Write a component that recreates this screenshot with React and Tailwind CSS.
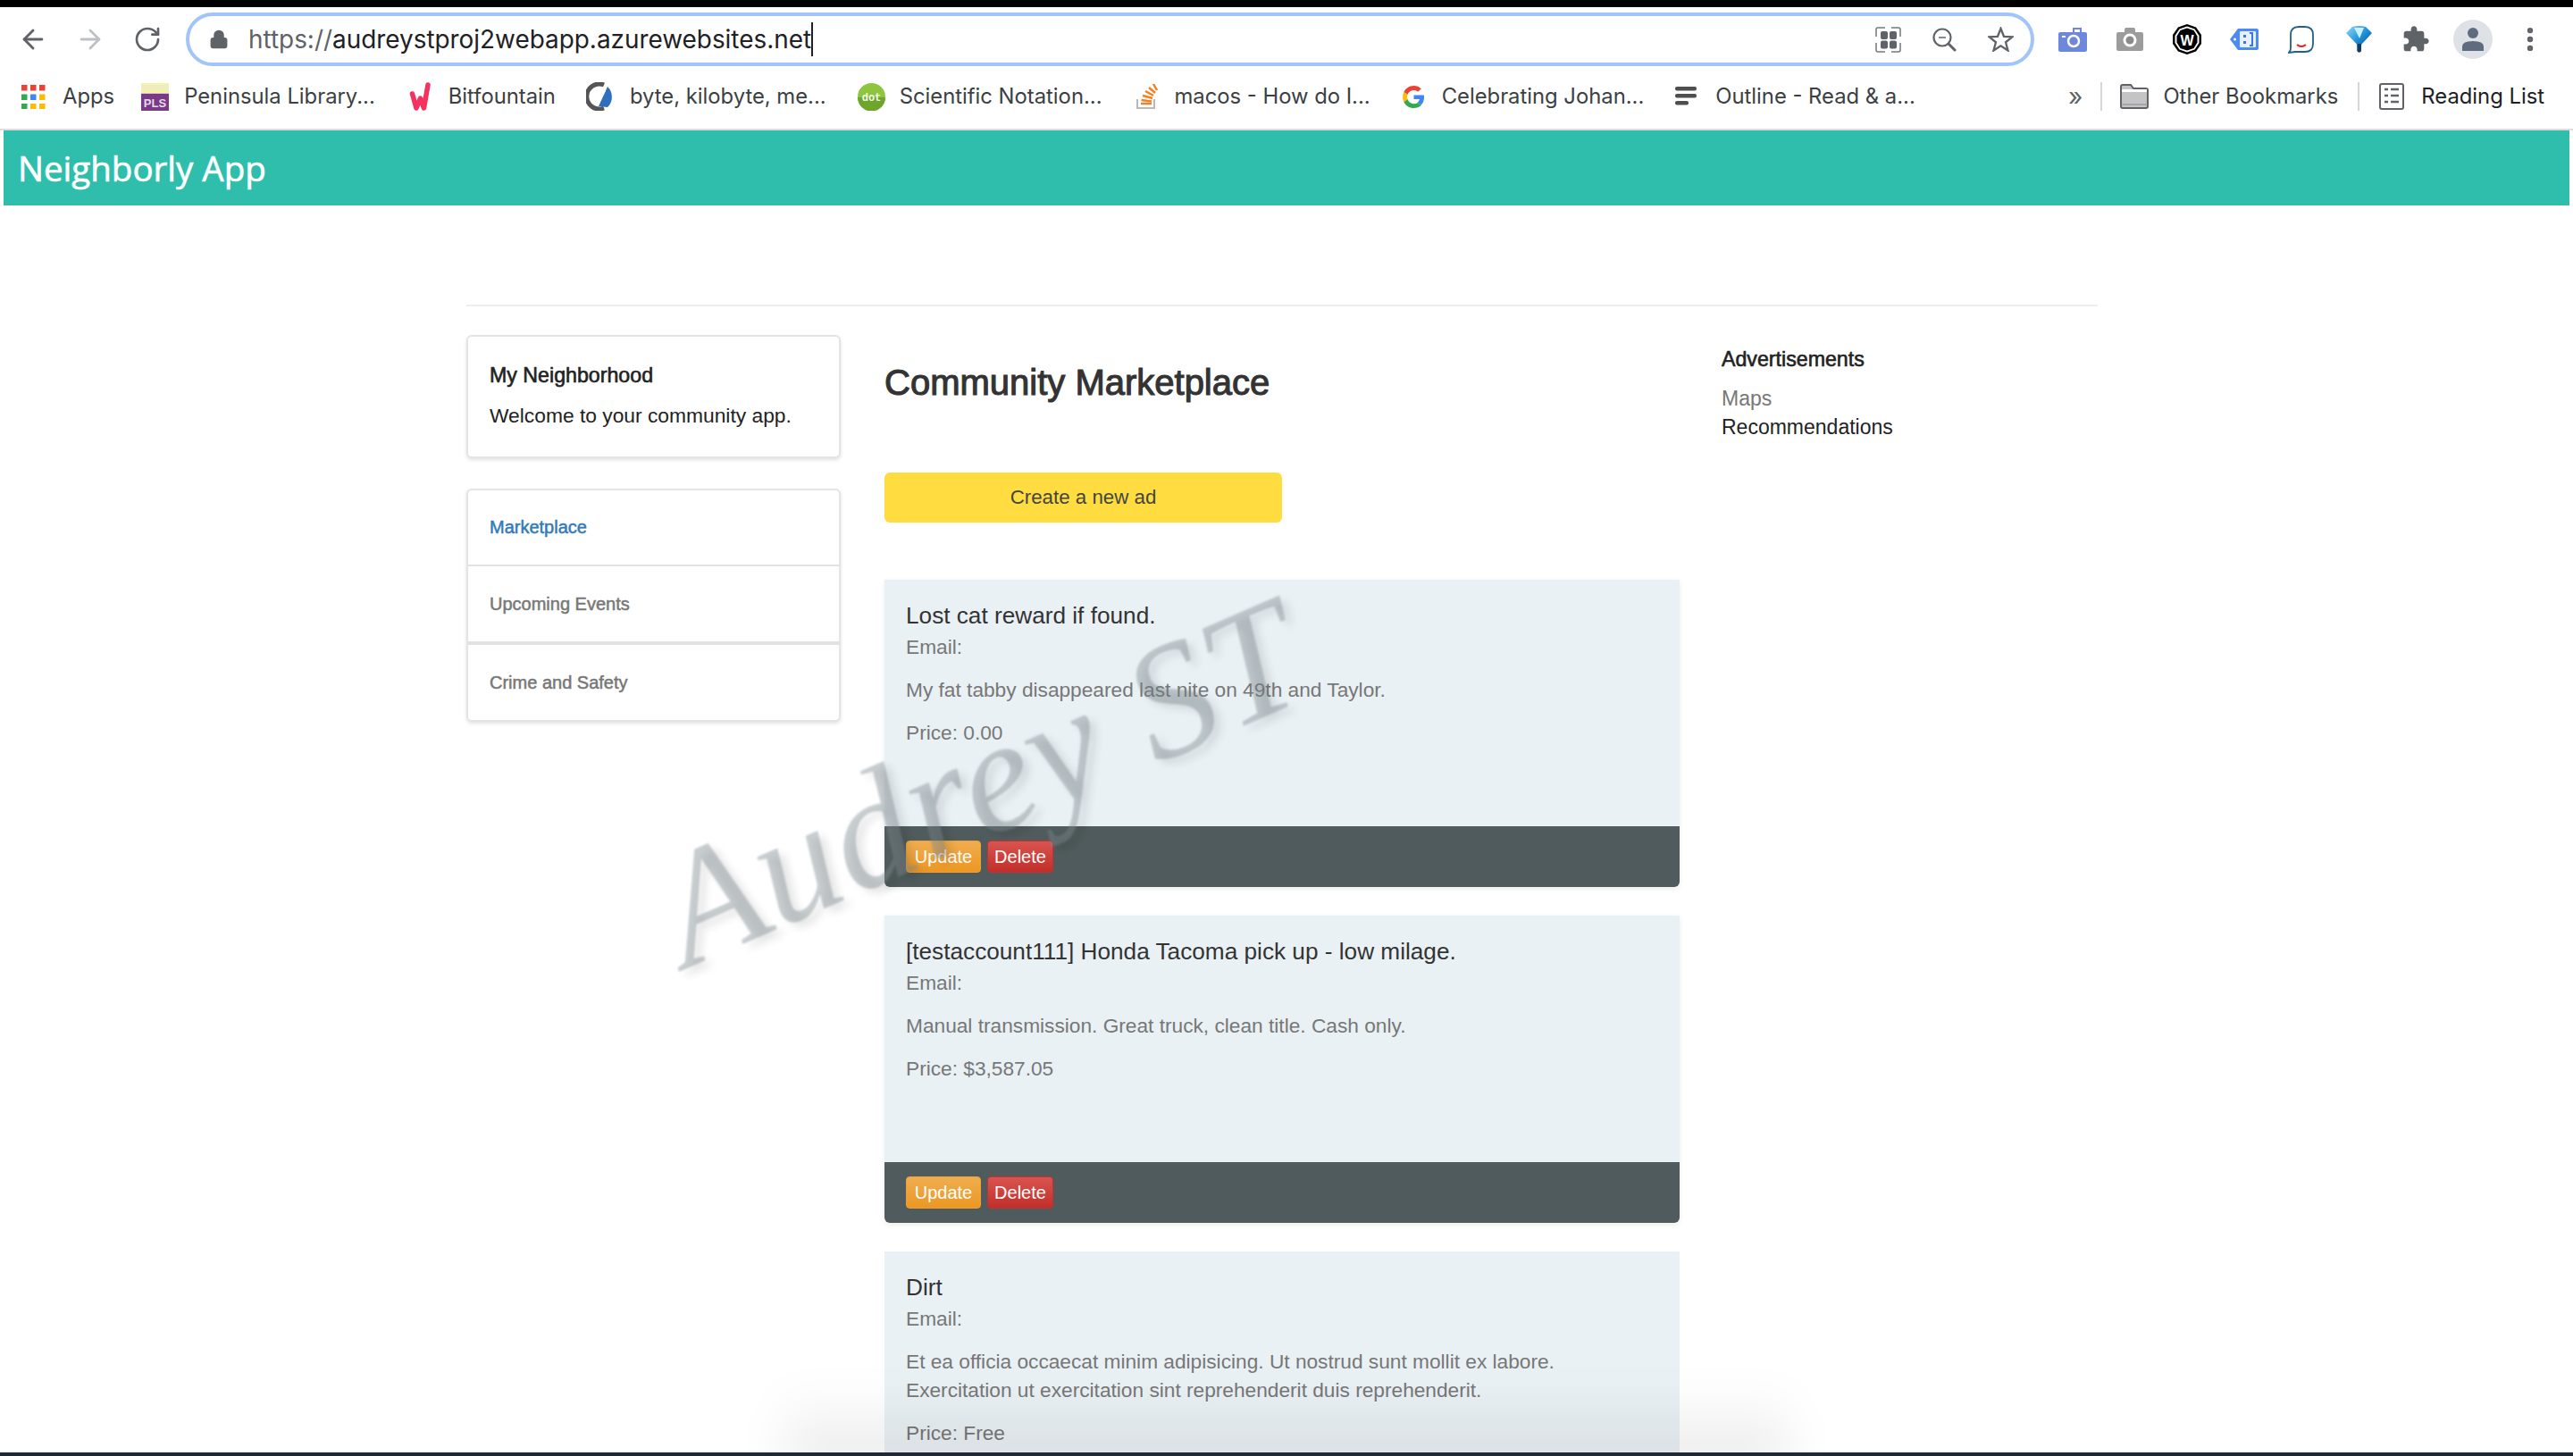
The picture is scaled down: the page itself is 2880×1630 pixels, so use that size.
import { ArrowLeft, ArrowRight, RotateCw, Lock, MoreVertical } from "lucide-react";

const AppsIcon = () => (
  <svg width="27" height="27" viewBox="0 0 27 27">
    {[
      ["#ea4335", "#ea4335", "#ea4335"],
      ["#34a853", "#4285f4", "#fbbc05"],
      ["#34a853", "#fbbc05", "#fbbc05"],
    ].map((row, y) =>
      row.map((c, x) => <rect key={`${x}${y}`} x={x * 10} y={y * 10.5} width="6.5" height="6.5" fill={c} />)
    )}
  </svg>
);

const PlsIcon = () => (
  <svg width="31" height="31" viewBox="0 0 31 31">
    <rect width="31" height="11" fill="#f5f3a8" />
    <rect y="2" width="31" height="6" fill="#efedc0" />
    <rect y="11" width="31" height="2" fill="#d8c8d8" />
    <rect y="12" width="31" height="19" fill="#7a3a86" />
    <text x="15.5" y="27" textAnchor="middle" fontSize="13" fontWeight="700" fill="#e4dcec" fontFamily="Liberation Sans, sans-serif">PLS</text>
  </svg>
);

const BitIcon = () => (
  <svg width="24" height="32" viewBox="0 0 24 32">
    <path d="M3.5 13 L8 29 L12.500 18 L16.500 29 L21 3" fill="none" stroke="#f5325f" strokeWidth="5.500" strokeLinecap="round" strokeLinejoin="round" />
  </svg>
);

const ByteIcon = () => (
  <svg width="32" height="32" viewBox="0 0 32 32">
    <path d="M20 3 A14 14 0 1 0 20 29" fill="none" stroke="#555" strokeWidth="5" />
    <path d="M24 5 C30 10 31 22 24 28 L14 27 Z" fill="#2f6fbd" />
    <path d="M21 9 L13 24" stroke="#fff" strokeWidth="2.5" />
  </svg>
);

const DotIcon = () => (
  <svg width="31" height="31" viewBox="0 0 31 31">
    <circle cx="15.5" cy="15.5" r="15.5" fill="#8cc63f" />
    <path d="M0 16 A15.5 15.5 0 0 0 31 16 Z" fill="#6ea52c" />
    <text x="15.5" y="20" textAnchor="middle" fontSize="12" fontWeight="700" fill="#f4fbe6" fontFamily="Liberation Mono, monospace">dot</text>
  </svg>
);

const StackIcon = () => (
  <svg width="24" height="28" viewBox="0 0 24 28">
    <path d="M1 17 V27 H20 V17" fill="none" stroke="#b8b8b8" strokeWidth="2" />
    <path d="M5 22 H17" stroke="#f48024" strokeWidth="2.5" />
    <path d="M5.5 18 L17 19.5" stroke="#f48024" strokeWidth="2.5" />
    <path d="M7 13 L18 16" stroke="#f48024" strokeWidth="2.5" />
    <path d="M10 8 L19 13" stroke="#f48024" strokeWidth="2.5" />
    <path d="M14 4 L21 10" stroke="#f48024" strokeWidth="2.5" />
    <path d="M19 0 L23 7" stroke="#f48024" strokeWidth="2.5" />
  </svg>
);

const GoogleIcon = () => (
  <svg width="25" height="25" viewBox="0 0 48 48">
    <path fill="#EA4335" d="M24 9.5c3.5 0 6.7 1.3 9.1 3.5l6.8-6.8C35.800 2.400 30.200 0 24 0 14.600 0 6.500 5.400 2.600 13.200l7.900 6.100C12.400 13.700 17.700 9.500 24 9.500z" />
    <path fill="#4285F4" d="M46.100 24.500c0-1.600-.1-3.100-.4-4.500H24v9h12.400c-.5 2.900-2.100 5.300-4.600 7l7.500 5.800c4.400-4 6.800-10 6.800-17.300z" />
    <path fill="#FBBC05" d="M10.500 28.700c-.5-1.400-.8-3-.8-4.700s.3-3.200.8-4.700l-7.900-6.100C.900 16.500 0 20.100 0 24s.9 7.500 2.600 10.800l7.900-6.100z" />
    <path fill="#34A853" d="M24 48c6.500 0 11.900-2.100 15.900-5.800l-7.500-5.800c-2.200 1.500-5 2.300-8.300 2.300-6.300 0-11.600-4.200-13.500-9.900l-7.900 6.100C6.500 42.600 14.600 48 24 48z" />
  </svg>
);

const OutlineIcon = () => (
  <svg width="25" height="22" viewBox="0 0 25 22">
    <rect width="24" height="4.500" rx="2" fill="#4e4e4e" />
    <rect y="8" width="24" height="4.500" rx="2" fill="#4e4e4e" />
    <rect y="16" width="15" height="4.500" rx="2" fill="#4e4e4e" />
  </svg>
);

const FolderIcon = () => (
  <svg width="32" height="28" viewBox="0 0 32 28">
    <path d="M1 3 Q1 1 3 1 H12 L15 5 H29 Q31 5 31 7 V25 Q31 27 29 27 H3 Q1 27 1 25 Z" fill="#c4c4c4" stroke="#5f6368" strokeWidth="2" />
    <path d="M2 6 H30 V9 H2 Z" fill="#fff" />
    <path d="M1 23 H31" stroke="#8a8a8a" strokeWidth="1" />
  </svg>
);

const ReadingIcon = () => (
  <svg width="28" height="30" viewBox="0 0 28 30">
    <rect x="1" y="1" width="26" height="28" rx="2" fill="#fff" stroke="#5f6368" strokeWidth="2" />
    {[7, 14, 21].map((y) => (
      <g key={y} stroke="#5f6368" strokeWidth="2.500">
        <path d={`M6 ${y} H10`} />
        <path d={`M13 ${y} H22`} />
      </g>
    ))}
  </svg>
);

const ScanIcon = () => (
  <svg width="29" height="29" viewBox="0 0 29 29">
    <path d="M11 1 H3 Q1 1 1 3 V11 M18 1 H26 Q28 1 28 3 V11 M11 28 H3 Q1 28 1 26 V18 M18 28 H26 Q28 28 28 26 V18" fill="none" stroke="#777" strokeWidth="1.500" />
    <rect x="6" y="5" width="8" height="9" rx="2" fill="#5f6368" />
    <rect x="16" y="5" width="8" height="9" rx="2" fill="#5f6368" />
    <rect x="6" y="15.500" width="8" height="9" rx="2" fill="#5f6368" />
    <rect x="16" y="15.500" width="8" height="9" rx="2" fill="#5f6368" />
  </svg>
);

const ZoomOutIcon = () => (
  <svg width="27" height="27" viewBox="0 0 27 27">
    <circle cx="11" cy="11" r="9.500" fill="none" stroke="#5f6368" strokeWidth="2.200" />
    <path d="M7 11 H15" stroke="#5f6368" strokeWidth="1.500" />
    <path d="M18 18 L25 25" stroke="#5f6368" strokeWidth="3" strokeLinecap="round" />
  </svg>
);

const StarIcon = () => (
  <svg width="29" height="28" viewBox="0 0 29 28">
    <polygon points="14.500,2 18,10.800 27.500,11.300 20,17.300 22.500,26.500 14.500,21.300 6.500,26.500 9,17.300 1.500,11.300 11,10.800" fill="none" stroke="#5f6368" strokeWidth="2.300" />
  </svg>
);

const BlueCamera = () => (
  <svg width="32" height="27" viewBox="0 0 32 27">
    <path d="M2 5 H16 V0 H26 V5 H30 Q32 5 32 7 V25 Q32 27 30 27 H2 Q0 27 0 25 V7 Q0 5 2 5 Z" fill="#6c87dc" />
    <rect x="18" y="2" width="6" height="3" fill="#fff" />
    <circle cx="17" cy="15" r="6" fill="none" stroke="#fff" strokeWidth="2.500" />
    <rect x="4" y="9" width="4" height="2" fill="#fff" />
  </svg>
);

const GreyCamera = () => (
  <svg width="30" height="26" viewBox="0 0 30 26">
    <path d="M2 5 H9 V2 Q9 0 11 0 H19 Q21 0 21 2 V5 H28 Q30 5 30 7 V24 Q30 26 28 26 H2 Q0 26 0 24 V7 Q0 5 2 5 Z" fill="#9c9c9c" />
    <circle cx="15" cy="14" r="6" fill="#8a8a8a" stroke="#fff" strokeWidth="3" />
  </svg>
);

const WBadge = () => (
  <svg width="34" height="34" viewBox="0 0 34 34">
    <path d="M17 0 L27 3.500 L33 12 V22 L27 30.500 L17 34 L7 30.500 L1 22 V12 L7 3.500 Z" fill="#000" />
    <path d="M17 2.500 L25.500 5.500 L30.500 13 V21 L25.500 28.500 L17 31.500 L8.500 28.500 L3.500 21 V13 L8.500 5.500 Z" fill="#fff" />
    <path d="M17 4.500 L24.500 7 L28.500 13.500 V20.500 L24.500 27 L17 29.500 L9.500 27 L5.500 20.500 V13.500 L9.500 7 Z" fill="#000" />
    <text x="17" y="23.500" textAnchor="middle" fontSize="16" fontWeight="700" fill="#fff" fontFamily="Liberation Sans, sans-serif">W</text>
  </svg>
);

const TagIcon = () => (
  <svg width="32" height="24" viewBox="0 0 32 24">
    <path d="M9 0 H30 Q32 0 32 2 V22 Q32 24 30 24 H9 L0 12 Z" fill="#4c8bf5" />
    <rect x="11" y="3" width="18" height="18" rx="1" fill="#e8f0fe" />
    <rect x="15" y="7" width="3" height="3" fill="#3a76e0" />
    <rect x="15" y="14" width="3" height="3" fill="#3a76e0" />
    <path d="M22 5 H25 V19 H22" fill="none" stroke="#3a76e0" strokeWidth="2" />
    <circle cx="5.500" cy="12" r="1.500" fill="#fff" />
  </svg>
);

const BubbleIcon = () => (
  <svg width="30" height="32" viewBox="0 0 30 32">
    <path d="M3 26 V11 Q3 2 12 2 H19 Q28 2 28 11 V21 Q28 30 19 30 H8 L1 31 Q3 29 3 26 Z" fill="#fff" stroke="#1f5f88" strokeWidth="1.800" />
    <path d="M10 22 Q15 26 20 22" fill="none" stroke="#e0201b" strokeWidth="2" />
  </svg>
);

const FunnelIcon = () => (
  <svg width="29" height="30" viewBox="0 0 29 30">
    <defs>
      <linearGradient id="funnelFill" x1="0" y1="0" x2="1" y2="1">
        <stop offset="0" stopColor="#8fdcf7" />
        <stop offset="0.5" stopColor="#1c8fd8" />
        <stop offset="1" stopColor="#0a3f80" />
      </linearGradient>
    </defs>
    <path d="M0 8 L7 1 Q14.500 -1 22 1 L29 8 L17 21 V28 Q14.500 31 12.500 28 V21 Z" fill="url(#funnelFill)" />
    <path d="M9 2 L20 2 L15 14 Z" fill="#c9f0fb" />
    <path d="M12.500 20 H17 V28 Q14.500 31 12.500 28 Z" fill="#173a5e" />
  </svg>
);

const PuzzleIcon = () => (
  <svg width="32" height="32" viewBox="0 0 24 24">
    <path fill="#5f6368" d="M20.500 11H19V7c0-1.100-.9-2-2-2h-4V3.500C13 2.120 11.880 1 10.500 1S8 2.120 8 3.500V5H4c-1.100 0-1.990.9-1.990 2v3.800H3.500c1.490 0 2.700 1.210 2.700 2.700s-1.210 2.700-2.700 2.700H2V20c0 1.100.9 2 2 2h3.800v-1.500c0-1.490 1.210-2.700 2.700-2.700 1.490 0 2.700 1.210 2.700 2.700V22H17c1.100 0 2-.9 2-2v-4h1.500c1.380 0 2.500-1.120 2.500-2.500S21.880 11 20.500 11z" />
  </svg>
);

const AvatarIcon = () => (
  <div className="w-[44px] h-[44px] rounded-full bg-[#dee1e6] flex items-center justify-center">
    <svg width="24" height="26" viewBox="0 0 24 26">
      <circle cx="12" cy="6" r="6" fill="#5f6b7e" />
      <path d="M0 26 V21 Q0 15 12 15 Q24 15 24 21 V26 Z" fill="#5f6b7e" />
    </svg>
  </div>
);

const bookmarks = [
  { icon: <AppsIcon />, label: "Apps", w: "w-[27px]", ml: "ml-[24px]", gap: "gap-[19px]" },
  { icon: <PlsIcon />, label: "Peninsula Library...", w: "w-[31px]", ml: "ml-[30px]", gap: "gap-[17px]" },
  { icon: <BitIcon />, label: "Bitfountain", w: "w-[26px]", ml: "ml-[37px]", gap: "gap-[19px]" },
  { icon: <ByteIcon />, label: "byte, kilobyte, me...", w: "w-[32px]", ml: "ml-[34px]", gap: "gap-[17px]" },
  { icon: <DotIcon />, label: "Scientific Notation...", w: "w-[31px]", ml: "ml-[35px]", gap: "gap-[16px]" },
  { icon: <StackIcon />, label: "macos - How do I...", w: "w-[24px]", ml: "ml-[38px]", gap: "gap-[19px]" },
  { icon: <GoogleIcon />, label: "Celebrating Johan...", w: "w-[25px]", ml: "ml-[36px]", gap: "gap-[19px]" },
  { icon: <OutlineIcon />, label: "Outline - Read & a...", w: "w-[25px]", ml: "ml-[35px]", gap: "gap-[20px]" },
];

const listings = [
  {
    title: "Lost cat reward if found.",
    desc: ["My fat tabby disappeared last nite on 49th and Taylor."],
    price: "Price: 0.00",
  },
  {
    title: "[testaccount111] Honda Tacoma pick up - low milage.",
    desc: ["Manual transmission. Great truck, clean title. Cash only."],
    price: "Price: $3,587.05",
  },
];

const Listing = ({ title, desc, price }) => (
  <div className="rounded-b-md shadow-[0_2px_6px_rgba(0,0,0,0.08)] mb-[32px]">
    <div className="bg-[#eaf1f5] h-[276px] px-[24px] pt-[25px]">
      <h3 className="text-[26.200px] leading-[30px] text-[#333]">{title}</h3>
      <div className="text-[#777] text-[22.700px] leading-[32px] mt-[4px]">Email:</div>
      {desc.map((d) => (
        <p key={d} className="text-[#777] text-[22.700px] leading-[32px] mt-[16px]">{d}</p>
      ))}
      <p className="text-[#777] text-[22.700px] leading-[32px] mt-[16px]">{price}</p>
    </div>
    <div className="bg-[#4f5b5c] h-[68px] rounded-b-md px-[24px] flex items-center gap-[7px]">
      <button className="w-[84px] h-[36px] rounded-[4px] bg-gradient-to-b from-[#f0ad4e] to-[#ec971f] border border-[#eea236] text-white text-[20px]">Update</button>
      <button className="w-[74px] h-[36px] rounded-[4px] bg-gradient-to-b from-[#d9534f] to-[#c12e2a] border border-[#c9302c] text-white text-[20px]">Delete</button>
    </div>
  </div>
);

export default function App() {
  return (
    <div className="relative w-[2880px] h-[1630px] overflow-hidden bg-white font-['Liberation_Sans',sans-serif]">
      <div className="h-[8px] bg-black" />

      {/* browser toolbar */}
      <div className="h-[72px] flex items-center pl-[5px] text-[#5f6368]">
        <div className="w-[64px] flex justify-center"><ArrowLeft size={34} strokeWidth={2} /></div>
        <div className="w-[64px] flex justify-center text-[#bdc1c6]"><ArrowRight size={34} strokeWidth={2} /></div>
        <div className="w-[64px] flex justify-center"><RotateCw size={32} strokeWidth={2} /></div>
        <div className="ml-[11px] w-[2069px] h-[60px] rounded-full border-[4px] border-[#a1c5fb] flex items-center pl-[22px]">
          <Lock size={22} fill="#5f6368" strokeWidth={2.500} />
          <div className="ml-[22px] font-['Inter',sans-serif] text-[27.900px] text-[#202124] border-r-2 border-[#202124] leading-[38px]">
            <span className="text-[#5f6368]">https://</span>audreystproj2webapp.azurewebsites.net
          </div>
          <div className="ml-auto mr-[19px] flex items-center">
            <ScanIcon />
            <div className="ml-[35px]"><ZoomOutIcon /></div>
            <div className="ml-[35px]"><StarIcon /></div>
          </div>
        </div>
        <div className="ml-[11px] flex items-center">
          <div className="w-[64px] flex justify-center"><BlueCamera /></div>
          <div className="w-[64px] flex justify-center"><GreyCamera /></div>
          <div className="w-[64px] flex justify-center"><WBadge /></div>
          <div className="w-[64px] flex justify-center"><TagIcon /></div>
          <div className="w-[64px] flex justify-center"><BubbleIcon /></div>
          <div className="w-[64px] flex justify-center"><FunnelIcon /></div>
          <div className="w-[64px] flex justify-center"><PuzzleIcon /></div>
          <div className="w-[64px] flex justify-center"><AvatarIcon /></div>
          <div className="w-[64px] flex justify-center"><MoreVertical size={34} strokeWidth={2.500} /></div>
        </div>
      </div>

      {/* bookmarks bar */}
      <div className="h-[64px] pb-[8px] flex items-center font-['Inter',sans-serif] text-[23.800px] text-[#3c4043]">
        {bookmarks.map((b) => (
          <div key={b.label} className={`flex items-center ${b.ml} ${b.gap} whitespace-nowrap`}>
            <div className={`${b.w} flex justify-center`}>{b.icon}</div>
            {b.label}
          </div>
        ))}
        <div className="ml-auto flex items-center pr-[32px]">
          <span className="text-[28px] text-[#5f6368]">»</span>
          <div className="w-[2px] h-[32px] bg-[#d5d6d8] ml-[20px] mr-[20px]" />
          <FolderIcon />
          <span className="ml-[16px]">Other Bookmarks</span>
          <div className="w-[2px] h-[32px] bg-[#d5d6d8] mx-[22px]" />
          <ReadingIcon />
          <span className="ml-[19px] text-[#202124]">Reading List</span>
        </div>
      </div>
      <div className="h-[2px] bg-[#e0dde0]" />

      {/* page */}
      <div className="mx-[4px] h-[84px] bg-[#2fbeac] flex items-center pl-[16px]">
        <span className="mt-[2px] font-['Open_Sans',sans-serif] text-[38.500px] text-white [-webkit-text-stroke:0.6px_#ffffff]">Neighborly App</span>
      </div>

      <div className="ml-[522px] w-[1826px] mt-[111px] border-t-2 border-[#eeeeee] pt-[32px] flex">
        <aside className="w-[419px]">
          <div className="h-[138px] bg-white border-2 border-[#e4e4e4] rounded-md shadow-[0_2px_4px_rgba(0,0,0,0.12)] px-[24px] pt-[26px] text-[22.800px] text-[#222]">
            <div className="leading-[34px] text-[23.200px] [-webkit-text-stroke:0.6px_#222222]">My Neighborhood</div>
            <div className="leading-[34px] mt-[11px]">Welcome to your community app.</div>
          </div>
          <div className="mt-[34px] bg-white border-2 border-[#e4e4e4] rounded-md shadow-[0_2px_4px_rgba(0,0,0,0.12)] text-[20px]">
            <div className="h-[85px] px-[24px] pb-[2px] flex items-center text-[#337ab7] border-b-2 border-[#e2e2e2] [-webkit-text-stroke:0.5px_#337ab7]">Marketplace</div>
            <div className="h-[88px] px-[24px] flex items-center text-[#777] border-b-4 border-[#e2e2e2] [-webkit-text-stroke:0.5px_#777777]">Upcoming Events</div>
            <div className="h-[84px] px-[24px] flex items-center text-[#777] [-webkit-text-stroke:0.5px_#777777]">Crime and Safety</div>
          </div>
        </aside>

        <main className="w-[890px] ml-[49px]">
          <h1 className="mt-[28px] text-[40px] leading-[50px] text-[#333] [-webkit-text-stroke:1.1px_#333333]">Community Marketplace</h1>
          <button className="mt-[76px] block w-[445px] h-[56px] rounded-md bg-[#ffdd40] text-[#444] text-[22.300px]">Create a new ad</button>
          <div className="mt-[64px]">
            {listings.map((l) => (
              <Listing key={l.title} {...l} />
            ))}
            <div className="bg-[#eaf1f5] h-[300px] px-[24px] pt-[25px]">
              <h3 className="text-[26.200px] leading-[30px] text-[#333]">Dirt</h3>
              <div className="text-[#777] text-[22.700px] leading-[32px] mt-[4px]">Email:</div>
              <p className="text-[#777] text-[22.700px] leading-[32px] mt-[16px]">
                Et ea officia occaecat minim adipisicing. Ut nostrud sunt mollit ex labore.
                <br />
                Exercitation ut exercitation sint reprehenderit duis reprehenderit.
              </p>
              <p className="text-[#777] text-[22.700px] leading-[32px] mt-[16px]">Price: Free</p>
            </div>
          </div>
        </main>

        <aside className="ml-[47px] text-[23px]">
          <div className="mt-[11px] leading-[32px] text-[23.200px] text-[#222] [-webkit-text-stroke:0.6px_#222222]">Advertisements</div>
          <div className="mt-[12px] leading-[32px] text-[#777]">Maps</div>
          <div className="leading-[32px] text-[#222]">Recommendations</div>
        </aside>
      </div>

      {/* watermark over the page */}
      <div className="absolute left-[745px] top-[939px] origin-left -rotate-[23.500deg] whitespace-nowrap pointer-events-none font-['Liberation_Serif',serif] italic text-[180px] leading-none tracking-[2px] text-[rgba(125,135,140,0.42)] blur-[1px] [text-shadow:5px_8px_10px_rgba(0,0,0,0.1)]">
        Audrey ST
      </div>

      {/* dock shadow at the bottom edge */}
      <div className="absolute left-[880px] right-[880px] -bottom-[16px] h-[90px] bg-gradient-to-t from-[rgba(0,0,0,0.1)] to-transparent blur-[26px]" />
      <div className="absolute left-0 right-0 bottom-0 h-[4px] bg-[#1d2a36]" />
    </div>
  );
}
